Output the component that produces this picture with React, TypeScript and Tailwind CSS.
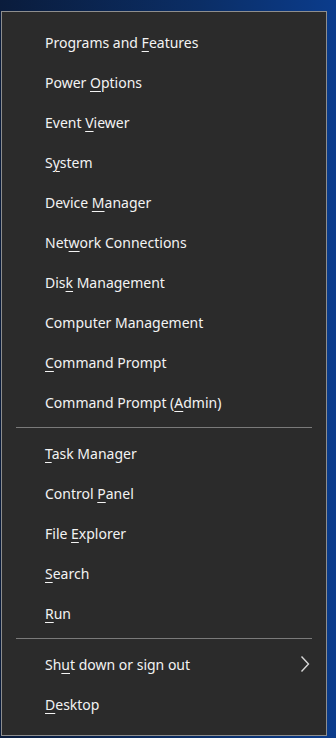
import React from 'react';

type MenuItem = {
  label: string;
  key: number; // index of the underlined access-key letter, -1 for none
  submenu?: boolean;
};

const groups: MenuItem[][] = [
  [
    { label: 'Programs and Features', key: 13 },
    { label: 'Power Options', key: 6 },
    { label: 'Event Viewer', key: 6 },
    { label: 'System', key: 1 },
    { label: 'Device Manager', key: 7 },
    { label: 'Network Connections', key: 3 },
    { label: 'Disk Management', key: 3 },
    { label: 'Computer Management', key: -1 },
    { label: 'Command Prompt', key: 0 },
    { label: 'Command Prompt (Admin)', key: 16 },
  ],
  [
    { label: 'Task Manager', key: 0 },
    { label: 'Control Panel', key: 8 },
    { label: 'File Explorer', key: 5 },
    { label: 'Search', key: 0 },
    { label: 'Run', key: 0 },
  ],
  [
    { label: 'Shut down or sign out', key: 2, submenu: true },
    { label: 'Desktop', key: 0 },
  ],
];

const Label: React.FC<{ text: string; at: number }> = ({ text, at }) => {
  if (at < 0) return <span>{text}</span>;
  return (
    <span>
      {text.slice(0, at)}
      <span className="underline underline-offset-[3px] decoration-1">{text.charAt(at)}</span>
      {text.slice(at + 1)}
    </span>
  );
};

export default function App() {
  return (
    <div
      className="w-[336px] h-[738px] overflow-hidden pt-[11px] pl-[1px] bg-[linear-gradient(90deg,#0a1c3c_0%,#0b2e66_60%,#0b3c8c_100%)]"
      style={{ fontFamily: '"Noto Sans", "Open Sans", sans-serif' }}
    >
      <div className="w-[326px] h-[725px] border border-[#8e8e8e] bg-[#2b2b2b] pt-[10px] flex flex-col">
        {groups.map((group, gi) => (
          <React.Fragment key={gi}>
            {gi > 0 && (
              <div className="h-[11px] flex items-center px-[14px]">
                <div className="h-px w-full bg-[#7a7a7a]" />
              </div>
            )}
            {group.map((item) => (
              <div
                key={item.label}
                className="h-10 flex items-center pl-[43px] pr-[16px] text-[14px] text-[#f3f3f3]"
              >
                <Label text={item.label} at={item.key} />
                {item.submenu && (
                  <svg
                    className="ml-auto"
                    width="10"
                    height="18"
                    viewBox="0 0 10 18"
                    fill="none"
                    stroke="#d8d8d8"
                    strokeWidth="1.4"
                  >
                    <path d="M1.5 1.5 L8.5 9 L1.5 16.5" />
                  </svg>
                )}
              </div>
            ))}
          </React.Fragment>
        ))}
      </div>
    </div>
  );
}
